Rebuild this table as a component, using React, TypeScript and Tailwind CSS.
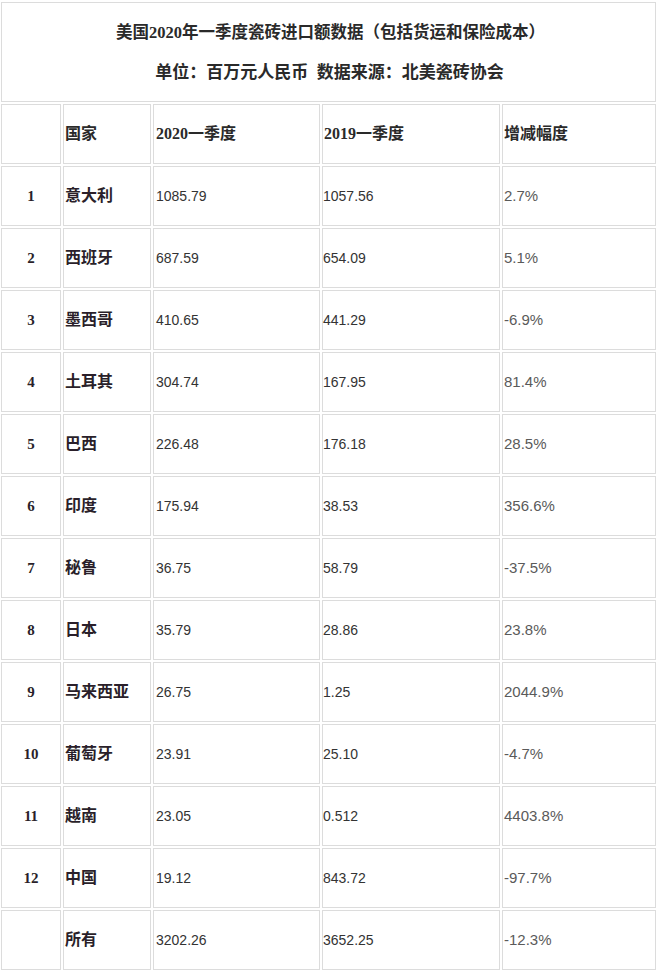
import React from "react";

const rows: [string, string, string, string, string][] = [
  ["1", "意大利", "1085.79", "1057.56", "2.7%"],
  ["2", "西班牙", "687.59", "654.09", "5.1%"],
  ["3", "墨西哥", "410.65", "441.29", "-6.9%"],
  ["4", "土耳其", "304.74", "167.95", "81.4%"],
  ["5", "巴西", "226.48", "176.18", "28.5%"],
  ["6", "印度", "175.94", "38.53", "356.6%"],
  ["7", "秘鲁", "36.75", "58.79", "-37.5%"],
  ["8", "日本", "35.79", "28.86", "23.8%"],
  ["9", "马来西亚", "26.75", "1.25", "2044.9%"],
  ["10", "葡萄牙", "23.91", "25.10", "-4.7%"],
  ["11", "越南", "23.05", "0.512", "4403.8%"],
  ["12", "中国", "19.12", "843.72", "-97.7%"],
  ["", "所有", "3202.26", "3652.25", "-12.3%"],
];

const cell = "border border-[#dcdcdc] bg-white flex items-center h-[60px]";
const serif = "font-['Liberation_Serif','Noto_Sans_CJK_SC',serif]";
const sans = "font-['Liberation_Sans','Noto_Sans_CJK_SC',sans-serif]";

export default function App() {
  return (
    <div className="w-[658px] h-[972px] bg-white pt-[2px] pl-[1px]">
      <div className="grid grid-cols-[60px_88px_167px_178px_154px] gap-[2px]">
        <div
          className={`col-span-5 border border-[#dcdcdc] h-[100px] flex flex-col items-center justify-center gap-[19px] font-bold text-[#2a2a2a] leading-[21px] ${serif}`}
        >
          <div className="pl-[4px] text-[16.5px]">美国2020年一季度瓷砖进口额数据（包括货运和保险成本）</div>
          <div className="pl-[2px] text-[17px]">单位：百万元人民币&nbsp;&nbsp;数据来源：北美瓷砖协会</div>
        </div>

        <div className={cell} />
        <div className={`${cell} pl-[1px] font-bold text-[16px] text-[#2a2a2a] ${serif}`}>国家</div>
        <div className={`${cell} pl-[2px] font-bold text-[16px] text-[#2a2a2a] ${serif}`}>2020一季度</div>
        <div className={`${cell} pl-[1px] font-bold text-[16px] text-[#2a2a2a] ${serif}`}>2019一季度</div>
        <div className={`${cell} pl-[1px] font-bold text-[16px] text-[#2a2a2a] ${serif}`}>增减幅度</div>

        {rows.map((r, i) => (
          <React.Fragment key={i}>
            <div className={`${cell} justify-center font-bold text-[15px] text-[#2a1f2a] ${serif}`}>{r[0]}</div>
            <div className={`${cell} pl-[1px] font-bold text-[16px] text-[#2a1f2a] ${serif}`}>{r[1]}</div>
            <div className={`${cell} pl-[2px] text-[14px] text-[#333333] ${sans}`}>{r[2]}</div>
            <div className={`${cell} text-[14px] text-[#333333] ${sans}`}>{r[3]}</div>
            <div className={`${cell} pl-[1px] text-[15px] text-[#5a5a5a] ${sans}`}>{r[4]}</div>
          </React.Fragment>
        ))}
      </div>
    </div>
  );
}
